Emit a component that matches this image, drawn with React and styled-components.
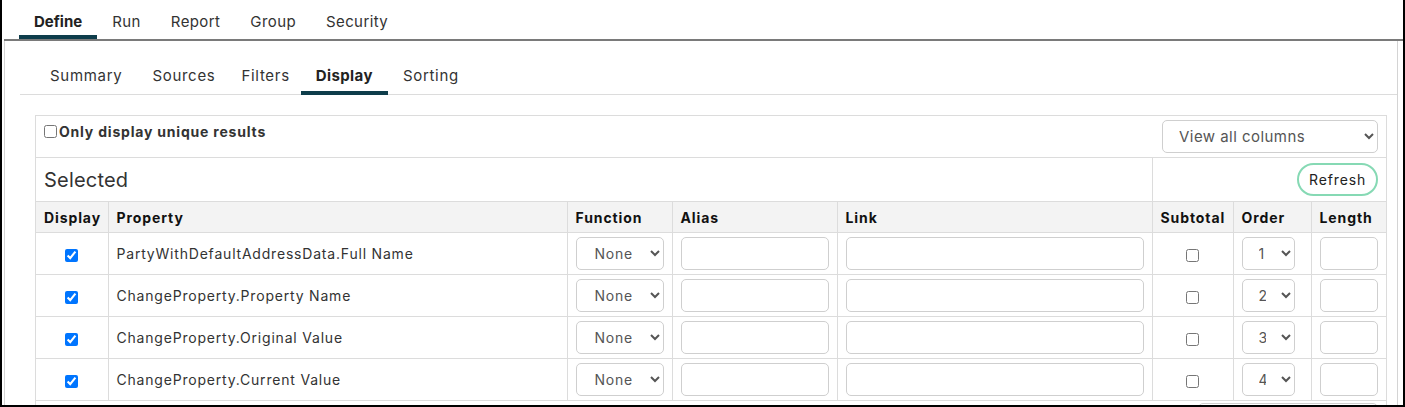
import React from 'react';
import styled, { createGlobalStyle } from 'styled-components';

const GlobalStyle = createGlobalStyle`
  html, body {
    margin: 0;
    padding: 0;
    background: #fff;
  }
  body {
    font-family: Inter, "Open Sans", sans-serif;
    color: #333;
  }
  * {
    box-sizing: border-box;
  }
`;

const Frame = styled.div`
  width: 1405px;
  height: 407px;
  overflow: hidden;
  border-left: 2px solid #000;
  border-right: 2px solid #000;
  border-bottom: 2px solid #000;
  padding-left: 2px;
`;

const TopNav = styled.nav`
  display: flex;
  height: 41px;
  padding-left: 15px;
  border-bottom: 2px solid #7a7a7a;
`;

const TopTab = styled.div`
  display: flex;
  align-items: center;
  height: 39px;
  padding: 8px 15px 0;
  font-size: 15px;
  letter-spacing: ${(p) => (p.$active ? '0' : '0.4px')};
  font-weight: ${(p) => (p.$active ? 700 : 400)};
  color: ${(p) => (p.$active ? '#222' : '#333')};
  border-bottom: 4px solid ${(p) => (p.$active ? '#0e3d4b' : 'transparent')};
`;

const Panel = styled.section`
  width: 1394px;
  height: 366px;
  border-left: 1px solid #d4d4d4;
  border-right: 1px solid #d4d4d4;
  padding: 15px 0 0 15px;
`;

const SubNav = styled.nav`
  display: flex;
  height: 39px;
  padding-left: 15px;
  border-bottom: 1px solid #dcdcdc;
`;

const SubTab = styled.div`
  display: flex;
  align-items: center;
  height: 39px;
  padding: 3px ${(p) => p.$pad || 15}px 0;
  font-size: 15px;
  letter-spacing: ${(p) => (p.$active ? '0.4px' : '0.7px')};
  font-weight: ${(p) => (p.$active ? 700 : 400)};
  color: ${(p) => (p.$active ? '#222' : '#333')};
  border-bottom: 4px solid ${(p) => (p.$active ? '#0e3d4b' : 'transparent')};
`;

const Box = styled.div`
  margin: 20px 10px 0 15px;
  border: 1px solid #dcdcdc;
  border-bottom: none;
  height: 300px;
`;

const Grid = styled.table`
  width: 100%;
  table-layout: fixed;
  border-collapse: collapse;
  font-size: 14px;
  letter-spacing: 0.8px;
`;

const Cell = styled.td`
  border-bottom: 1px solid #dcdcdc;
  border-right: 1px solid #dcdcdc;
  padding: 0 8px;
  height: ${(p) => p.$h || 42}px;
  text-align: ${(p) => (p.$center ? 'center' : 'left')};
  vertical-align: middle;
  color: #333;

  &:last-child {
    border-right: none;
  }
`;

const OptionsCell = styled(Cell)`
  vertical-align: top;
  padding: 4px 8px 4px 8px;
`;

const OptionsRow = styled.div`
  display: flex;
  align-items: flex-start;
  justify-content: space-between;
`;

const UniqueLabel = styled.label`
  display: flex;
  align-items: center;
  gap: 2px;
  margin-top: 3px;
  font-weight: 700;
  color: #333;

  input {
    margin: 0;
  }
`;

const ColumnsSelect = styled.select`
  width: 216px;
  height: 33px;
  border: 1px solid #cfcfcf;
  border-radius: 5px;
  background: #fff;
  padding: 0 10px 0 12px;
  font-family: inherit;
  font-size: 15px;
  letter-spacing: 0.45px;
  color: #555;
`;

const Heading = styled.span`
  font-size: 20px;
  letter-spacing: 0.2px;
  color: #333;
`;

const RefreshButton = styled.button`
  float: right;
  height: 33px;
  padding: 0 10px;
  border: 2px solid #86d9b4;
  border-radius: 17px;
  background: #fff;
  font-family: inherit;
  font-size: 14px;
  letter-spacing: 0.85px;
  color: #222;
`;

const HeadCell = styled.th`
  height: 31px;
  padding: 0 8px;
  text-align: left;
  font-weight: 700;
  letter-spacing: 0.9px;
  color: #111;
  background: #f3f3f3;
  border-bottom: 1px solid #dcdcdc;
  border-right: 1px solid #dcdcdc;

  &:last-child {
    border-right: none;
  }
`;

const Dropdown = styled.select`
  width: ${(p) => p.$width || '100%'};
  height: 33px;
  border: 1px solid #cfcfcf;
  border-radius: 5px;
  background: #fff;
  padding: 0 ${(p) => p.$pad || '12px'};
  font-family: inherit;
  font-size: 14px;
  letter-spacing: 0.75px;
  color: #555;
`;

const TextBox = styled.input`
  display: block;
  width: 100%;
  height: 33px;
  border: 1px solid #cfcfcf;
  border-radius: 5px;
  background: #fff;
`;

const Tick = styled.input`
  margin: 0;
  vertical-align: middle;
`;

const Footer = styled.div`
  display: flex;
  justify-content: flex-end;
  padding: 2px 8px 0 0;
`;

const FooterBar = styled.div`
  width: 180px;
  height: 20px;
  border: 1px solid #cfcfcf;
  border-radius: 5px 5px 0 0;
`;

const columns = [
  ['Display', 72],
  ['Property', 459],
  ['Function', 105],
  ['Alias', 165],
  ['Link', 315],
  ['Subtotal', 81],
  ['Order', 78],
  ['Length', 75],
];

const subTabs = [
  ['Summary', 15],
  ['Sources', 15],
  ['Filters', 11],
  ['Display', 15],
  ['Sorting', 15],
];

const rows = [
  'PartyWithDefaultAddressData.Full Name',
  'ChangeProperty.Property Name',
  'ChangeProperty.Original Value',
  'ChangeProperty.Current Value',
];

export default function App() {
  return (
    <>
      <GlobalStyle />
      <Frame>
        <TopNav>
          {['Define', 'Run', 'Report', 'Group', 'Security'].map((t) => (
            <TopTab key={t} $active={t === 'Define'}>
              {t}
            </TopTab>
          ))}
        </TopNav>
        <Panel>
          <SubNav>
            {subTabs.map(([t, pad]) => (
              <SubTab key={t} $pad={pad} $active={t === 'Display'}>
                {t}
              </SubTab>
            ))}
          </SubNav>
          <Box>
            <Grid>
              <colgroup>
                {columns.map(([name, w]) => (
                  <col key={name} style={{ width: w }} />
                ))}
              </colgroup>
              <tbody>
                <tr>
                  <OptionsCell colSpan={8} $h={41}>
                    <OptionsRow>
                      <UniqueLabel>
                        <input type="checkbox" />
                        Only display unique results
                      </UniqueLabel>
                      <ColumnsSelect defaultValue="all">
                        <option value="all">View all columns</option>
                      </ColumnsSelect>
                    </OptionsRow>
                  </OptionsCell>
                </tr>
                <tr>
                  <Cell colSpan={5} $h={44}>
                    <Heading>Selected</Heading>
                  </Cell>
                  <Cell colSpan={3} $h={44}>
                    <RefreshButton type="button">Refresh</RefreshButton>
                  </Cell>
                </tr>
                <tr>
                  {columns.map(([name]) => (
                    <HeadCell key={name}>{name}</HeadCell>
                  ))}
                </tr>
                {rows.map((prop, i) => (
                  <tr key={prop}>
                    <Cell $center>
                      <Tick type="checkbox" defaultChecked />
                    </Cell>
                    <Cell>{prop}</Cell>
                    <Cell>
                      <Dropdown defaultValue="none" $pad="14px">
                        <option value="none">None</option>
                      </Dropdown>
                    </Cell>
                    <Cell>
                      <TextBox type="text" />
                    </Cell>
                    <Cell>
                      <TextBox type="text" />
                    </Cell>
                    <Cell $center>
                      <Tick type="checkbox" />
                    </Cell>
                    <Cell>
                      <Dropdown defaultValue={i + 1} $width="53px" $pad="12px">
                        {rows.map((_, n) => (
                          <option key={n} value={n + 1}>
                            {n + 1}
                          </option>
                        ))}
                      </Dropdown>
                    </Cell>
                    <Cell>
                      <TextBox type="text" />
                    </Cell>
                  </tr>
                ))}
              </tbody>
            </Grid>
            <Footer>
              <FooterBar />
            </Footer>
          </Box>
        </Panel>
      </Frame>
    </>
  );
}
